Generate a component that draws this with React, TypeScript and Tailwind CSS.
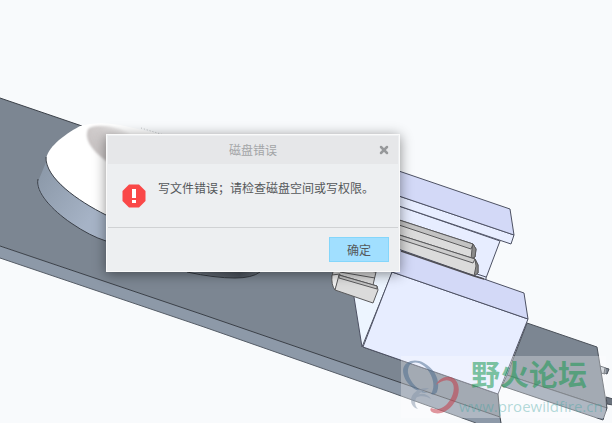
import { X } from 'lucide-react';

function ModelView() {
  return (
    <svg
      className="absolute inset-0 w-full h-full"
      viewBox="0 0 612 423"
      preserveAspectRatio="xMinYMin slice"
      aria-hidden="true"
    >
      <defs>
        <linearGradient id="rim" x1="37" y1="180" x2="90" y2="220" gradientUnits="userSpaceOnUse">
          <stop offset="0" stopColor="#8d9aaa" />
          <stop offset="1" stopColor="#a6b3c6" />
        </linearGradient>
        <linearGradient id="hollow" x1="86" y1="150" x2="125" y2="125" gradientUnits="userSpaceOnUse">
          <stop offset="0" stopColor="#c4bfbf" />
          <stop offset="0.5" stopColor="#d3cfcf" />
          <stop offset="1" stopColor="#faf9f9" />
        </linearGradient>
        <linearGradient id="pit" x1="187" y1="0" x2="262" y2="0" gradientUnits="userSpaceOnUse">
          <stop offset="0" stopColor="#737b86" />
          <stop offset="0.7" stopColor="#4d545e" />
          <stop offset="1" stopColor="#6d7580" />
        </linearGradient>
        <filter id="soft">
          <feGaussianBlur stdDeviation="1" />
        </filter>
      </defs>

      {/* base plate */}
      <path d="M0 98L82 126L340 214L363 347L498 394L500 417L0 246Z" fill="#7c8692" />
      <path d="M0 246L204 315L390 379L500 417L501 423H476L390 392L204 327L0 258Z" fill="#8d99a8" />
      <g fill="none" stroke="#3b4048" strokeWidth="1">
        <path d="M0 98L82 126" />
        <path d="M0 246L204 315L390 379L500 417" />
        <path d="M0 258L204 327L390 392L476 423" stroke="#565d67" />
        <path d="M363 347L498 394L500 417L501 423" />
      </g>

      {/* dome */}
      <path d="M47 160L37 184C39 198 54 211 71 223Q90 236 106 241L140 250V190L60 150Z" fill="url(#rim)" />
      <path d="M46 160C47 148 62 136 80 126Q97 121 120 125L160 134L200 150V240L106 215C78 201 47 178 46 160Z" fill="#fff" />
      <path d="M88 129C84 138 90 149 106 161H130V134C118 126 95 123 88 129Z" fill="url(#hollow)" filter="url(#soft)" />
      <g fill="none" stroke="#3b4048" strokeWidth="1">
        <path d="M46 157C45 178 78 201 106 215" />
        <path d="M38 179C35 192 52 210 71 223Q90 236 106 241" />
        <path d="M141 128L164 135" stroke="#c0c3c6" strokeDasharray="1 2" />
      </g>
      <path d="M187 270Q215 278 235 278Q254 278 261 270Z" fill="url(#pit)" />
      <path d="M187 272Q215 278 235 278Q252 278 260 272" fill="none" stroke="#343940" />

      {/* small plate on the right */}
      <g stroke="#4b515a" strokeWidth="1">
        <path d="M600 366L606 368L605 374L601 373Z" fill="#c3c9d0" />
        <path d="M605 368L609 369L607 374L604 373Z" fill="#7d8590" />
        <path d="M606 397L613 399V405L607 404Z" fill="#6a727d" />
        <path d="M527 323L597 347L607 408L507 375Z" fill="#7c8692" />
        <path d="M507 375L607 408L603 420L502 386Z" fill="#8d99a8" />
      </g>

      {/* rear block */}
      <g stroke="#4d5163" strokeWidth="1" strokeLinejoin="round">
        <path d="M390 203L500 241L486 278L486 281L390 248Z" fill="#e7edff" />
        <path d="M390 193L514 235L511 244L390 203Z" fill="#e7edff" />
        <path d="M390 168L510 209L514 235L390 193Z" fill="#d3d9f7" />
        <path d="M477 274L486 277" fill="none" />
      </g>
      <g stroke="#5a5a5c" strokeWidth="1" strokeLinejoin="round">
        <path d="M390 217L473 244L476 249L475 257L471 259L390 233Z" fill="#dbdbdb" />
        <path d="M390 217L473 244L471 249L390 222Z" fill="#c3c3c3" />
        <path d="M473 244L476 249L475 257L471 259L472 249Z" fill="#8b8b8b" />
        <path d="M390 232L475 259L478 265L478 273L474 276L402 252L390 240Z" fill="#dbdbdb" />
        <path d="M390 232L475 259L473 263L390 236Z" fill="#cdcdcd" />
        <path d="M475 259L478 265L478 273L474 276L476 266Z" fill="#8b8b8b" />
      </g>

      {/* front block */}
      <g stroke="#4d5163" strokeWidth="1" strokeLinejoin="round">
        <path d="M350 268H394L362 347L354 297Z" fill="#edf5ff" />
        <path d="M392 272L528 319L498 394L363 347Z" fill="#e7edff" />
        <path d="M385 245L401 250L524 293L528 319L392 272Z" fill="#d3d9f7" />
      </g>
      <path d="M401 251L474 276L484 279" fill="none" stroke="#4f4f55" strokeWidth="1.5" />
      <g stroke="#5a5a5c" strokeWidth="1" strokeLinejoin="round">
        <path d="M334 266L376 272L373 285L332 277Z" fill="#dbdbdb" />
        <path d="M340 272L375 278" />
        <path d="M332 275L340 274L339 279L335 290Q331 285 332 275Z" fill="#f1f1f1" />
        <path d="M339 275L377 286L378 290L373 303L335 290Z" fill="#dbdbdb" />
        <path d="M339 275L377 286L377 289L339 278Z" fill="#c6c6c6" />
      </g>
    </svg>
  );
}

function ForumMark() {
  return (
    <div className="absolute right-[6px] bottom-[5px] w-[205px] h-[62px] bg-white/30 flex">
      <svg className="w-[58px] h-[62px] shrink-0" viewBox="0 0 58 62" aria-hidden="true">
        <g opacity="0.5" fillRule="evenodd">
          <path
            d="M2 14C3 5 14 2 23 7C34 13 40 25 36 36C35 38 32 39 30 38C35 30 32 18 23 10C14 3 6 7 7 17C9 27 18 35 27 37C14 37 2 26 2 14Z"
            fill="#48698c"
          />
          <path
            d="M35 29C38 22 46 19 52 22C59 26 60 38 53 47C48 55 38 60 31 56C29 55 29 53 30 52C37 55 44 52 49 44C54 36 54 27 49 25C44 23 39 26 35 29Z"
            fill="#c5313f"
          />
          <path
            d="M28 32C18 31 10 37 10 44C10 49 13 52 17 53C13 49 13 43 18 38C22 34 26 34 28 32Z"
            fill="#8796aa"
          />
          <path d="M14 40C20 36 27 38 30 43C26 40 19 39 14 42Z" fill="#8796aa" />
        </g>
      </svg>
      <div className="flex flex-col gap-1 whitespace-nowrap">
        <span className="pl-3 pt-1 text-[29px] leading-8 font-bold text-[#15964f]/55 font-['Liberation_Sans','Noto_Sans_CJK_SC',sans-serif]">
          野火论坛
        </span>
        <span className="text-[15px] leading-5 text-[#3fa3a0]/40 font-['Open_Sans',sans-serif]">
          www.proewildfire.cn
        </span>
      </div>
    </div>
  );
}

function ErrorIcon() {
  return (
    <svg className="w-6 h-6 shrink-0" viewBox="0 0 24 24" aria-hidden="true">
      <path d="M7 0.500H17L23.500 7V17L17 23.500H7L0.500 17V7Z" fill="#fa4848" />
      <path d="M10 5H14V14H10ZM10 16H14V19H10Z" fill="#fff" />
    </svg>
  );
}

function ErrorDialog() {
  return (
    <div
      role="alertdialog"
      aria-labelledby="dialog-title"
      aria-describedby="dialog-message"
      className="absolute left-[106px] top-[134px] w-[294px] border border-[#fafafa] bg-[#edeff1] shadow-[0_2px_12px_rgba(0,0,0,0.45)] text-xs text-[#55585b] font-['Noto_Sans_CJK_SC',sans-serif]"
    >
      <div className="relative mx-px mt-px h-7 flex items-center justify-center bg-[#e6e7e9]">
        <h1 id="dialog-title" className="text-[#a3a5a7]">
          磁盘错误
        </h1>
        <button type="button" aria-label="关闭" className="absolute right-2 text-[#97999b]">
          <X className="w-3 h-3" strokeWidth={5} />
        </button>
      </div>
      <div className="h-16 mx-px px-[14px] pt-4 flex gap-3 border-b border-[#d0d2d4]">
        <div className="pt-1">
          <ErrorIcon />
        </div>
        <p id="dialog-message" className="leading-4 whitespace-nowrap">
          写文件错误；请检查磁盘空间或写权限。
        </p>
      </div>
      <div className="px-[10px] py-[9px] flex justify-end">
        <button type="button" className="w-[60px] h-[25px] border border-[#84d6fb] bg-[#a1dfff]">
          确定
        </button>
      </div>
    </div>
  );
}

export default function App() {
  return (
    <main className="relative min-h-screen overflow-hidden bg-[#f8fafc]">
      <ModelView />
      <ForumMark />
      <ErrorDialog />
    </main>
  );
}
